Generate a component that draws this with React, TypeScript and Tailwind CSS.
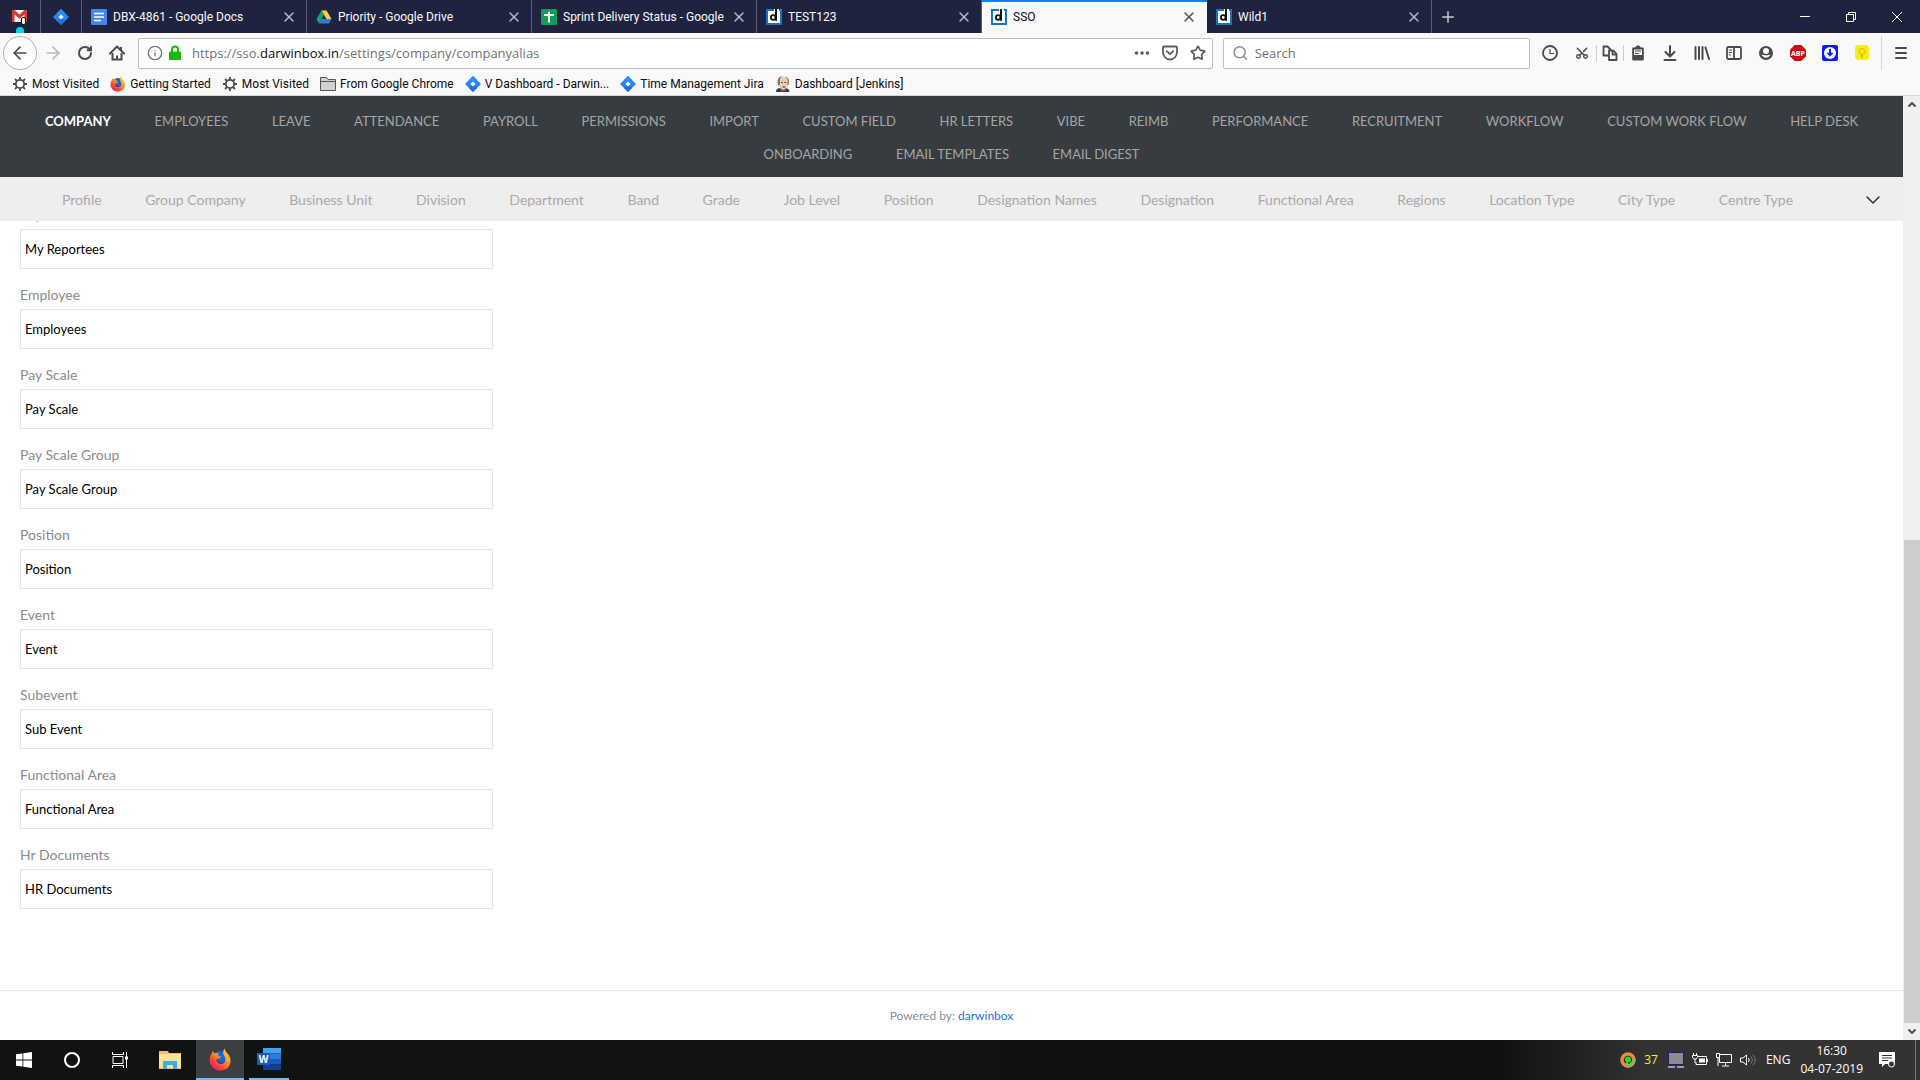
import React, { useState } from 'react';
import {
  ArrowLeft,
  ArrowRight,
  RotateCw,
  Info,
  Star,
  Search,
  Scissors,
  X,
  Plus,
  ChevronDown,
  ChevronUp,
} from 'lucide-react';

interface TabItem {
  title: string;
  icon: React.ReactNode;
  active?: boolean;
}

const JiraIcon = () => (
  <svg viewBox="0 0 16 16" className="size-4 shrink-0">
    <path d="M8 0l8 8-8 8-8-8z" fill="#2684ff" />
    <path d="M8 0l4 4-4 4-4-4z" fill="#2f8bff" />
    <path d="M8 8l4 4-4 4-4-4z" fill="#1f6fe5" />
    <path d="M8 5.4L10.6 8 8 10.6 5.4 8z" fill="#fff" />
  </svg>
);

const GmailIcon = () => (
  <svg viewBox="0 0 18 18" className="size-[18px]">
    <path d="M1 2h15v12H1z" fill="#f3f3f3" />
    <path d="M1 2h2.5l5 4.5 5-4.5H16v12h-2.5V6.5l-5 4.3-5-4.3V14H1z" fill="#d93a35" />
    <rect x="10.5" y="9.5" width="4" height="7" rx="1.5" fill="#fff" stroke="#111" />
  </svg>
);

const DocsIcon = () => (
  <svg viewBox="0 0 16 16" className="size-4 shrink-0">
    <rect width="16" height="16" rx="1" fill="#4285f4" />
    <path d="M3 4.5h10M3 8h10M3 11.5h7" stroke="#fff" strokeWidth="1.6" />
  </svg>
);

const DriveIcon = () => (
  <svg viewBox="0 0 16 16" className="size-4 shrink-0">
    <path d="M5.5 1.5h5l5 8.5h-5z" fill="#ffcd40" />
    <path d="M5.5 1.5L8 5.8 2.8 14.5.5 10z" fill="#11a861" />
    <path d="M5.3 10h10.2L13 14.5H2.8z" fill="#3777e3" />
  </svg>
);

const SheetsIcon = () => (
  <svg viewBox="0 0 16 16" className="size-4 shrink-0">
    <rect width="16" height="16" rx="1" fill="#0f9d58" />
    <path d="M3 6h10M8 2.5v11" stroke="#fff" strokeWidth="2" />
  </svg>
);

const DarwinIcon = () => (
  <svg viewBox="0 0 16 16" className="size-4 shrink-0">
    <rect width="16" height="16" fill="#fff" />
    <path d="M8 1H1v14h14V1h-2" fill="none" stroke="#1674c5" strokeWidth="2" />
    <circle cx="7.2" cy="8.5" r="2.3" fill="none" stroke="#111" strokeWidth="1.8" />
    <path d="M10 0v11.8" stroke="#111" strokeWidth="2" />
  </svg>
);

const GearIcon = () => (
  <svg viewBox="0 0 16 16" className="size-4 shrink-0" fill="none" stroke="#4a4a4a">
    <circle cx="8" cy="8" r="4.2" strokeWidth="1.8" />
    <path
      d="M8 1v2.5M8 12.5V15M1 8h2.5M12.5 8H15M3 3l1.8 1.8M11.2 11.2L13 13M3 13l1.8-1.8M11.2 4.8L13 3"
      strokeWidth="1.8"
    />
  </svg>
);

const FirefoxIcon = ({ className }: { className: string }) => (
  <svg viewBox="0 0 24 24" className={className}>
    <defs>
      <linearGradient id="fox" x1="1" y1="0" x2="0.2" y2="1">
        <stop offset="0" stopColor="#ffe226" />
        <stop offset="0.45" stopColor="#ff9a1f" />
        <stop offset="0.8" stopColor="#ff3b3b" />
        <stop offset="1" stopColor="#e31587" />
      </linearGradient>
    </defs>
    <circle cx="12" cy="12" r="9" fill="#0a6bea" />
    <path
      d="M16 .5c1 2 1.200 3 3 5 5 5 4 11 1 14.500-4 4.500-11.500 4.500-16 .5C-.5 16 0 9.500 3 5.500L4 3l2 2.500c2-.5 3 0 4 .500L9.500 8l3 1c0 1.500-2 1.500-3 2.500-.5 1.500 1 3.500 3 3.500 2.500 0 3-1.500 4.500-1 .5-3-1-6-2-7.500C14.500 4.500 15 2 16 .5z"
      fill="url(#fox)"
    />
    <path d="M9.5 11.5C7 11 7.5 14.5 10 16c3 1.5 5.5 0 7-2-1.5-.5-2 1-4.500 1-2 0-3.500-2-3-3.500z" fill="#1d3fa5" />
  </svg>
);

const FolderIcon = () => (
  <svg viewBox="0 0 16 16" className="size-4 shrink-0" fill="#d2d2d4" stroke="#555">
    <path d="M.5 14.5v-13h6l1.5 2h7.5v11z" />
    <path d="M.5 5.5h15" />
  </svg>
);

const JenkinsIcon = () => (
  <svg viewBox="0 0 16 16" className="size-4 shrink-0">
    <path d="M1 16c0-3 2-4 4-4h5c2.500 0 4 1 4.500 4z" fill="#2d3a4b" />
    <path d="M3 6c0-4 2-5.500 5-5.500S13 3 13 6l-1 5c-1 2-2 3-4 3s-3.500-2-4-4z" fill="#e9cfae" />
    <path d="M3.500 10C1.500 5 3 .5 7 .2 5 1.500 4.500 4 5 8z" fill="#7b7468" />
    <path d="M12 9c1.500-4 .5-7-2-8.500 3.500.5 5 4.500 3.500 8.500z" fill="#7b7468" />
    <path d="M6 6.500h1.500M9.500 6.500H11M7.500 11h3" stroke="#3b3028" />
    <path d="M6 12.500l2.500 1.500 2.500-1.500v3.500l-2.500-1-2.500 1z" fill="#d33833" />
  </svg>
);

const HomeIcon = () => (
  <svg viewBox="0 0 16 16" className="size-4" fill="none" stroke="#4a4a4f" strokeWidth="2">
    <path d="M1 8.5L8 1.5l7 7" strokeLinecap="round" strokeLinejoin="round" />
    <path d="M3.5 8v6.5h9V8M12 2v3" />
    <path d="M8 14.5v-4" />
  </svg>
);

const PocketIcon = () => (
  <svg viewBox="0 0 16 16" className="size-4" fill="none" stroke="#5b5b5f" strokeWidth="1.8" strokeLinecap="round" strokeLinejoin="round">
    <path d="M2 1.5h12q1 0 1 1V7c0 4-3 7.5-7 7.5S1 11 1 7V2.5q0-1 1-1z" />
    <path d="M4.8 6.2L8 9.2l3.2-3" />
  </svg>
);

const tabs: TabItem[] = [
  { title: 'DBX-4861 - Google Docs', icon: <DocsIcon /> },
  { title: 'Priority - Google Drive', icon: <DriveIcon /> },
  { title: 'Sprint Delivery Status - Google', icon: <SheetsIcon /> },
  { title: 'TEST123', icon: <DarwinIcon /> },
  { title: 'SSO', icon: <DarwinIcon />, active: true },
  { title: 'Wild1', icon: <DarwinIcon /> },
];

const bookmarks: TabItem[] = [
  { title: 'Most Visited', icon: <GearIcon /> },
  { title: 'Getting Started', icon: <FirefoxIcon className="size-4 shrink-0" /> },
  { title: 'Most Visited', icon: <GearIcon /> },
  { title: 'From Google Chrome', icon: <FolderIcon /> },
  { title: 'V Dashboard - Darwin...', icon: <JiraIcon /> },
  { title: 'Time Management Jira', icon: <JiraIcon /> },
  { title: 'Dashboard [Jenkins]', icon: <JenkinsIcon /> },
];

const mainNav = [
  'COMPANY',
  'EMPLOYEES',
  'LEAVE',
  'ATTENDANCE',
  'PAYROLL',
  'PERMISSIONS',
  'IMPORT',
  'CUSTOM FIELD',
  'HR LETTERS',
  'VIBE',
  'REIMB',
  'PERFORMANCE',
  'RECRUITMENT',
  'WORKFLOW',
  'CUSTOM WORK FLOW',
  'HELP DESK',
  'ONBOARDING',
  'EMAIL TEMPLATES',
  'EMAIL DIGEST',
];

const subNav = [
  'Profile',
  'Group Company',
  'Business Unit',
  'Division',
  'Department',
  'Band',
  'Grade',
  'Job Level',
  'Position',
  'Designation Names',
  'Designation',
  'Functional Area',
  'Regions',
  'Location Type',
  'City Type',
  'Centre Type',
];

const aliases = [
  { label: 'Reportees', value: 'My Reportees' },
  { label: 'Employee', value: 'Employees' },
  { label: 'Pay Scale', value: 'Pay Scale' },
  { label: 'Pay Scale Group', value: 'Pay Scale Group' },
  { label: 'Position', value: 'Position' },
  { label: 'Event', value: 'Event' },
  { label: 'Subevent', value: 'Sub Event' },
  { label: 'Functional Area', value: 'Functional Area' },
  { label: 'Hr Documents', value: 'HR Documents' },
];

const TabBar = () => (
  <div className="flex h-[33px] bg-[#202340] font-['Roboto',sans-serif] text-xs text-[#f9f9fa]">
    <button aria-label="Gmail" className="relative flex w-[41px] items-center justify-center border-r border-[#5c5e74]">
      <GmailIcon />
      <span className="absolute bottom-0 left-4 h-1.5 w-2 rounded-t-full bg-[#00d8e6]" />
    </button>
    <button aria-label="Jira" className="flex w-[41px] items-center justify-center border-r border-[#5c5e74]">
      <JiraIcon />
    </button>
    {tabs.map((tab) => (
      <div
        key={tab.title}
        className={
          tab.active
            ? 'flex w-[225px] items-center border-t-2 border-[#0a84ff] bg-[#f9f9fa] pr-2.5 pb-0.5 pl-[9px] text-[#0c0c0d]'
            : 'flex w-[225px] items-center border-r border-[#5c5e74] pr-[9px] pl-[9px]'
        }
      >
        <button className="flex min-w-0 flex-1 items-center gap-1.5 text-left">
          {tab.icon}
          <span className="pt-px whitespace-nowrap">{tab.title}</span>
        </button>
        <button aria-label={`Close ${tab.title}`} className={tab.active ? 'text-[#4a4a4f]' : 'text-[#bcbdc6]'}>
          <X className="size-4" strokeWidth={2} />
        </button>
      </div>
    ))}
    <button aria-label="New tab" className="flex w-8 items-center justify-center text-[#c9cad2]">
      <Plus className="size-[18px]" strokeWidth={2} />
    </button>
    <div className="ml-auto flex">
      <button aria-label="Minimize" className="flex w-[46px] items-center justify-center">
        <svg viewBox="0 0 10 10" className="size-2.5" stroke="#fff">
          <path d="M0 4.5h10" />
        </svg>
      </button>
      <button aria-label="Restore" className="flex w-[46px] items-center justify-center">
        <svg viewBox="0 0 10 10" className="size-2.5" fill="none" stroke="#fff">
          <path d="M.5 2.5h7v7h-7zM2.5 2.5v-2h7v7h-2" />
        </svg>
      </button>
      <button aria-label="Close window" className="flex w-[46px] items-center justify-center">
        <svg viewBox="0 0 10 10" className="size-2.5" stroke="#fff">
          <path d="M0 0l10 10M10 0L0 10" />
        </svg>
      </button>
    </div>
  </div>
);

const ExtensionButtons = () => (
  <div className="flex h-[34px] items-center text-[#4a4a4f]">
    <button aria-label="History" className="flex w-9 justify-center">
      <svg viewBox="0 0 16 16" className="size-4" fill="none" stroke="currentColor" strokeWidth="1.8">
        <circle cx="8" cy="8" r="7" />
        <path d="M8 4v4.500h4" strokeWidth="1.2" />
      </svg>
    </button>
    <button aria-label="Cut" className="flex w-7 justify-center">
      <Scissors className="size-3.5 -rotate-90" strokeWidth={2.5} />
    </button>
    <button aria-label="Copy" className="flex w-7 justify-center border-x border-[#ccc]">
      <svg viewBox="0 0 16 16" className="size-4" fill="#f9f9fa" stroke="currentColor" strokeWidth="1.8" strokeLinejoin="round">
        <path d="M1.5 1.5h4l3 3v6h-7z" />
        <path d="M7 5.5h4L14.5 9v6H7z" />
        <path d="M10.5 6v3.500H14" />
      </svg>
    </button>
    <button aria-label="Paste" className="mr-0.5 flex w-7 justify-center">
      <svg viewBox="0 0 16 16" className="size-4">
        <path d="M3 2.500h2L7 .5h2l2 2h2q.8 0 .8 1v11q0 1-1 1H3.200q-1 0-1-1v-11q0-1 .8-1z" fill="currentColor" />
        <path d="M4 4.500h8V10H4z" fill="#f9f9fa" />
        <path d="M5 6h6M5 8.500h4" stroke="currentColor" strokeWidth="1.2" />
      </svg>
    </button>
    <button aria-label="Downloads" className="flex w-8 justify-center">
      <svg viewBox="0 0 16 16" className="size-4" fill="none" stroke="currentColor" strokeWidth="2" strokeLinecap="round" strokeLinejoin="round">
        <path d="M8 1v10M3.5 7L8 11.5 12.5 7M2.5 15h11" />
      </svg>
    </button>
    <button aria-label="Library" className="flex w-8 justify-center">
      <svg viewBox="0 0 16 16" className="size-4" fill="none" stroke="currentColor" strokeWidth="2" strokeLinecap="round">
        <path d="M1.5 2v12M5 2v12M8.5 2v12M11.5 2.5L15 14" />
      </svg>
    </button>
    <button aria-label="Sidebars" className="flex w-8 justify-center">
      <svg viewBox="0 0 16 16" className="size-4" fill="none" stroke="currentColor" strokeWidth="1.8">
        <rect x="1" y="2" width="14" height="12" rx="1.5" />
        <path d="M8 2v12" />
        <path d="M3 5h3M3 7.5h3M3 10h2" strokeWidth="1" />
      </svg>
    </button>
    <button aria-label="Account" className="flex w-8 justify-center">
      <svg viewBox="0 0 16 16" className="size-4">
        <circle cx="8" cy="8" r="7" fill="currentColor" />
        <circle cx="8" cy="6" r="3" fill="#f9f9fa" />
        <path d="M3.5 9.5a4.800 4.800 0 009 0c-2 1-7 1-9 0z" fill="#f9f9fa" />
      </svg>
    </button>
    <button aria-label="Adblock Plus" className="flex w-8 justify-center">
      <svg viewBox="0 0 16 16" className="size-4">
        <path d="M4.7 0h6.6L16 4.7v6.6L11.3 16H4.7L0 11.3V4.7z" fill="#c70d0d" />
        <text x="8" y="10.5" textAnchor="middle" fontSize="7" fontWeight="700" fill="#fff">
          ABP
        </text>
      </svg>
    </button>
    <button aria-label="Download helper" className="flex w-8 justify-center">
      <svg viewBox="0 0 16 16" className="size-4">
        <rect width="16" height="16" rx="2" fill="#0a1cf5" />
        <circle cx="8" cy="8" r="6" fill="#fff" />
        <path d="M8 4v6" stroke="#0a1cf5" strokeWidth="2" />
        <path d="M4.5 7.8h7L8 11.8z" fill="#0a1cf5" />
      </svg>
    </button>
    <button aria-label="Turn off the lights" className="flex w-8 justify-center">
      <svg viewBox="0 0 16 16" className="size-4">
        <rect x="1" width="14" height="15" rx="4" fill="#f9ec1b" />
        <circle cx="8" cy="6.5" r="3" fill="none" stroke="#d9b90f" />
        <path d="M7 10h2v3H7z" fill="#d9b90f" />
      </svg>
    </button>
    <button aria-label="Open menu" className="ml-[3px] flex h-full w-[39px] items-center justify-center border-l border-[#d7d7db]">
      <svg viewBox="0 0 14 14" className="size-3.5" stroke="currentColor" strokeWidth="2" strokeLinecap="round">
        <path d="M2 2h10M2 7h10M2 12h10" />
      </svg>
    </button>
  </div>
);

const Toolbar = () => (
  <div className="flex h-10 items-center bg-[#f9f9fa] pl-[3px] text-[13px]">
    <button aria-label="Back" className="flex size-[34px] items-center justify-center rounded-full border border-[#b1b1b3] bg-white text-[#4a4a4f]">
      <ArrowLeft className="size-5" strokeWidth={2} />
    </button>
    <button aria-label="Forward" className="flex w-8 justify-center text-[#b9b9bb]">
      <ArrowRight className="size-5" strokeWidth={2} />
    </button>
    <button aria-label="Reload" className="flex w-8 justify-center text-[#4a4a4f]">
      <RotateCw className="size-4" strokeWidth={3} />
    </button>
    <button aria-label="Home" className="flex w-8 justify-center">
      <HomeIcon />
    </button>
    <div className="ml-[5px] flex h-[31px] flex-1 items-center rounded-xs border border-[#bebebe] bg-white pr-1.5 pl-2">
      <Info className="size-4 text-[#737373]" />
      <svg viewBox="0 0 14 16" className="mr-[9px] ml-1 size-4">
        <path d="M4 8V4.500a3 3 0 016 0V8" fill="none" stroke="#12bc00" strokeWidth="2" />
        <rect x="1" y="6.5" width="12" height="8.5" rx="1" fill="#12bc00" />
      </svg>
      <div className="flex-1 pt-0.5 text-[#737373]">
        https://sso.<span className="text-[#0c0c0d]">darwinbox.in</span>/settings/company/companyalias
      </div>
      <div className="flex items-center gap-3 text-[#5b5b5f]">
        <button aria-label="Page actions">
          <svg viewBox="0 0 16 16" className="size-4" fill="currentColor">
            <circle cx="2.5" cy="8" r="1.8" />
            <circle cx="8" cy="8" r="1.8" />
            <circle cx="13.5" cy="8" r="1.8" />
          </svg>
        </button>
        <button aria-label="Save to Pocket">
          <PocketIcon />
        </button>
        <button aria-label="Bookmark this page">
          <Star className="size-4" strokeWidth={2.5} />
        </button>
      </div>
    </div>
    <label className="mr-0.5 ml-2.5 flex h-[31px] w-[307px] items-center gap-1.5 rounded-xs border border-[#bebebe] bg-white pl-2">
      <Search className="size-[18px] text-[#8a8a8c]" />
      <input type="text" aria-label="Search" placeholder="Search" className="w-full pt-0.5 outline-none placeholder:text-[#737373]" />
    </label>
    <ExtensionButtons />
  </div>
);

const BookmarkBar = () => (
  <div className="flex h-[23px] items-center gap-[11px] border-b border-[#d5d8d8] bg-[#f9f9fa] px-3 font-['Roboto',sans-serif] text-xs text-[#0c0c0d]">
    {bookmarks.map((b, i) => (
      <a key={i} href="#" className="flex items-center gap-1 whitespace-nowrap">
        {b.icon}
        {b.title}
      </a>
    ))}
  </div>
);

const Scrollbar = () => (
  <div className="flex w-[17px] shrink-0 flex-col items-center bg-[#f0f0f0] pl-px">
    <ChevronUp className="h-[17px] w-3 text-[#505050]" strokeWidth={4} />
    <div className="flex-[427]" />
    <div className="w-full flex-[483] bg-[#cdcdcd]" />
    <ChevronDown className="h-[17px] w-3 text-[#505050]" strokeWidth={4} />
  </div>
);

const AliasForm = () => {
  const [values, setValues] = useState(aliases.map((a) => a.value));

  return (
    <form className="-mt-4 w-[493px] pl-5">
      {aliases.map((a, i) => (
        <div key={a.label} className="flex h-20 flex-col">
          <label htmlFor={`alias-${i}`} className="h-6 text-sm leading-5 text-[#8b8b8b]">
            {a.label}
          </label>
          <input
            id={`alias-${i}`}
            type="text"
            value={values[i]}
            onChange={(e) => setValues(values.map((v, j) => (j === i ? e.target.value : v)))}
            className="h-10 w-full border border-[#e3e3e3] bg-white px-1 text-[13px] text-black outline-none"
          />
        </div>
      ))}
    </form>
  );
};

const Page = () => (
  <div className="flex min-w-0 flex-1 flex-col bg-white font-['Lato',sans-serif]">
    <nav className="z-10 bg-[#373c40] pt-2 pb-[7px] text-center text-sm leading-[33px] text-[#a5a5a5]">
      {mainNav.map((item, i) => (
        <React.Fragment key={item}>
          <a
            href="#"
            className={
              i === 0
                ? 'px-5 text-[13px] leading-6 font-bold whitespace-nowrap text-white'
                : 'px-5 text-[13px] leading-6 whitespace-nowrap'
            }
          >
            {item}
          </a>{' '}
        </React.Fragment>
      ))}
    </nav>
    <nav className="z-10 flex h-11 items-center bg-[#eee] pt-px pr-[18px] pl-[42px] text-sm text-[#a9a9a9]">
      <div className="flex-1 whitespace-nowrap">
        {subNav.map((item) => (
          <React.Fragment key={item}>
            <a href="#" className="px-5">
              {item}
            </a>{' '}
          </React.Fragment>
        ))}
      </div>
      <button aria-label="More">
        <ChevronDown className="size-6 text-[#2b2d42]" strokeWidth={1.5} />
      </button>
    </nav>
    <main className="flex-1">
      <AliasForm />
    </main>
    <footer className="h-[50px] border-t border-[#e4e8ee] text-center text-xs leading-[50px] text-[#8590a0]">
      Powered by:{' '}
      <a href="#" className="text-[#1a73e8]">
        darwinbox
      </a>
    </footer>
  </div>
);

const Taskbar = () => (
  <div className="flex h-10 items-center bg-linear-to-r from-[#101311] via-[#101010] via-78% to-[#333] to-86% text-xs text-white">
    <button aria-label="Start" className="flex w-12 justify-center">
      <svg viewBox="0 0 16 16" className="size-4" fill="#fff">
        <path d="M0 2.3L6.5 1.4v6.2H0zM7.3 1.3L16 0v7.6H7.3zM0 8.4h6.5v6.2L0 13.7zM7.3 8.4H16V16l-8.7-1.3z" />
      </svg>
    </button>
    <button aria-label="Cortana" className="flex w-12 justify-center">
      <span className="size-4 rounded-full border-2 border-white" />
    </button>
    <button aria-label="Task view" className="flex w-12 justify-center">
      <svg viewBox="0 0 17 16" className="h-4 w-[17px]" fill="none" stroke="#fff">
        <path d="M1 4.5h10v7H1zM.5 0v2.5h11V0M.5 16v-2.500h11V16M14.500 0v16" />
        <path d="M13 4.5h3v3h-3z" fill="#fff" stroke="none" />
      </svg>
    </button>
    <button aria-label="File Explorer" className="flex w-[52px] justify-center">
      <svg viewBox="0 0 22 18" className="h-[18px] w-[22px]">
        <path d="M0 0h9l1 2h12v16H0z" fill="#f5c445" />
        <path d="M0 3h22v14H0z" fill="#ffe394" />
        <path d="M4 18v-8h14v8h-4v-4H8v4z" fill="#36b0ea" />
      </svg>
    </button>
    <button aria-label="Firefox" className="flex h-10 w-12 items-center justify-center border-b-2 border-[#76b9ed] bg-[#3c3f42]">
      <FirefoxIcon className="size-[23px]" />
    </button>
    <button aria-label="Word" className="ml-[5px] flex h-10 w-10 items-center justify-center border-b-2 border-[#76b9ed]">
      <svg viewBox="0 0 24 22" className="h-[22px] w-6">
        <path d="M6 0h18v5.500H6z" fill="#41a5ee" />
        <path d="M6 5.500h18V11H6z" fill="#2b7cd3" />
        <path d="M6 11h18v5.500H6z" fill="#185abd" />
        <path d="M6 16.500h18V22H6z" fill="#103f91" />
        <rect y="5" width="13" height="12" rx="1" fill="#185abd" />
        <text x="6.5" y="14.5" textAnchor="middle" fontSize="10" fontWeight="700" fill="#fff">
          W
        </text>
      </svg>
    </button>

    <div className="ml-auto flex items-center">
      <button aria-label="Antivirus">
        <svg viewBox="0 0 16 16" className="size-4">
          <circle cx="8" cy="8" r="6" fill="#3a2410" stroke="#ef8a3c" strokeWidth="3.5" />
          <circle cx="8" cy="7.5" r="3" fill="#1fe01f" />
          <path d="M6 10.5l3 3.5 6-7" fill="none" stroke="#5fc77a" strokeWidth="2.5" />
        </svg>
      </button>
      <span className="ml-2 text-[#f5f52a]">37</span>
      <svg viewBox="0 0 16 16" className="ml-2.5 size-4">
        <path d="M.5.5h15v12H.5z" fill="#8c8c8c" stroke="#1b1b78" />
        <path d="M0 14h7v2H0zM9 14h7v2H9z" fill="#9a9ab4" />
      </svg>
      <svg viewBox="0 0 16 14" className="ml-2 h-3.5 w-4" fill="none" stroke="#fff">
        <path d="M6 3.5h8.5v8H4V9" />
        <path d="M15.5 6v3" />
        <path d="M7 5.5h6v4H7z" fill="#fff" stroke="none" />
        <path d="M1.5 0v2M4.5 0v2M.5 2.5h5v2L4 6H2L.5 4.5zM3 6v4" />
      </svg>
      <svg viewBox="0 0 16 14" className="ml-2 h-3.5 w-4" fill="none" stroke="#fff">
        <path d="M4 1.5h11.5v8h-12V5M9.5 9.5v3M6 13h7" />
        <path d="M.5.5h3v4h-3zM2 5v8" />
      </svg>
      <svg viewBox="0 0 16 14" className="ml-2 h-3.5 w-4" fill="none" stroke="#fff">
        <path d="M.5 5v4H3l3.500 3V2L3 5z" />
        <path d="M8.5 5q1.500 2 0 4" />
        <path d="M11 3.500q3 3.500 0 7M13 1.500q4.500 5.500 0 11" stroke="#777" />
      </svg>
      <span className="ml-2.5">ENG</span>
      <div className="ml-2.5 text-center leading-[18px]">
        <div>16:30</div>
        <div>04-07-2019</div>
      </div>
      <button aria-label="Notifications" className="mr-5 ml-4 flex">
        <svg viewBox="0 0 16 16" className="size-4">
          <path d="M0 0h16v12H6l-3 3v-3H0z" fill="#fff" />
          <path d="M3 3.5h10M3 6h10M3 8.5h6" stroke="#333" />
          <circle cx="12.5" cy="12" r="3" fill="#333" stroke="#fff" />
        </svg>
      </button>
      <span className="h-10 w-[5px] border-l border-[#777]" />
    </div>
  </div>
);

const App: React.FC = () => (
  <div className="flex h-screen flex-col overflow-hidden font-['Open_Sans','Noto_Sans',sans-serif]">
    <header>
      <TabBar />
      <Toolbar />
      <BookmarkBar />
    </header>
    <div className="flex min-h-0 flex-1">
      <Page />
      <Scrollbar />
    </div>
    <Taskbar />
  </div>
);

export default App;
